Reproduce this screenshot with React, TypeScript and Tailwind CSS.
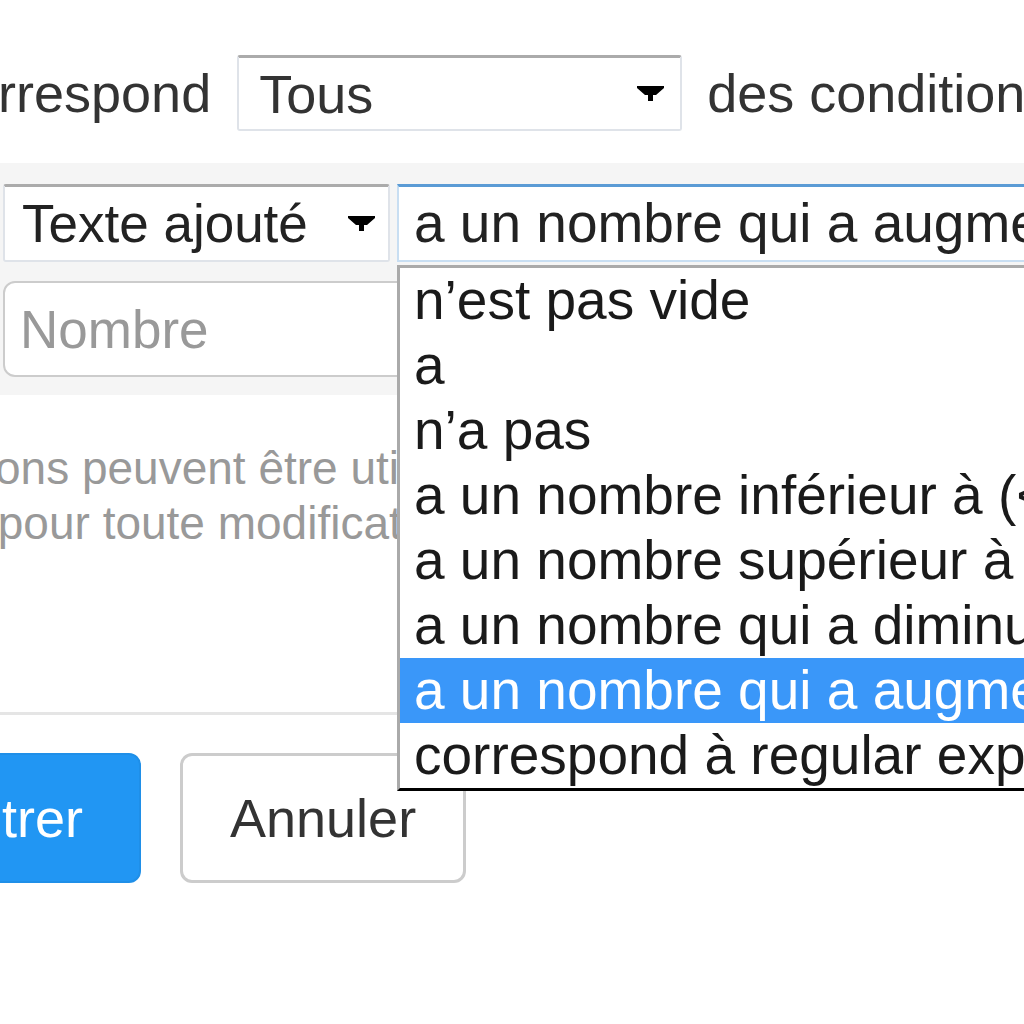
import { useState } from "react";

const options = [
  "n’est pas vide",
  "a",
  "n’a pas",
  "a un nombre inférieur à (<)",
  "a un nombre supérieur à (>)",
  "a un nombre qui a diminué",
  "a un nombre qui a augmenté",
  "correspond à regular expression",
];

function Caret() {
  return (
    <svg width="27" height="16" viewBox="0 0 27 16" className="shrink-0">
      <polygon
        points="0,0 27,0 27,2 19,9 16,9 16,15 11,15 11,9 8,9 0,2"
        fill="#000"
      />
    </svg>
  );
}

function FakeSelect({
  value,
  className,
}: {
  value: string;
  className: string;
}) {
  return (
    <div
      className={`flex items-center justify-between shrink-0 bg-white rounded-[3px] border-2 border-[#dfe3e9] border-t-[3px] border-t-[#ababab] ${className}`}
    >
      <span className="whitespace-nowrap">{value}</span>
      <Caret />
    </div>
  );
}

export default function App() {
  const [selected] = useState(6);

  return (
    <div className="relative w-[1024px] h-[1024px] overflow-hidden bg-white font-['Liberation_Sans',Arial,sans-serif] text-[54px] leading-none text-[#333]">
      {/* ligne "correspond ... des conditions" */}
      <div className="flex items-center h-[76px] mt-[55px] ml-[-59px] whitespace-nowrap">
        <span className="shrink-0">correspond</span>
        <FakeSelect value="Tous" className="ml-[26px] w-[445px] h-[76px] pl-[20px] pr-[16px]" />
        <span className="ml-[25px] shrink-0">des conditions</span>
      </div>

      {/* bloc condition */}
      <div className="mt-[32px] bg-[#f5f5f5] pt-[21px] pb-[18px] pl-[3px]">
        <div className="flex gap-[7px] whitespace-nowrap">
          <FakeSelect
            value="Texte ajouté"
            className="w-[387px] h-[78px] pl-[17px] pr-[13px] text-[53px] text-[#222]"
          />
          <div className="relative shrink-0 w-[800px] h-[78px] bg-white border-2 border-[#c8def2] border-t-[3px] border-t-[#5b9bd5] flex items-center pl-[15px] text-[55px] text-[#222]">
            a un nombre qui a augmenté
            <ul className="absolute z-10 left-[-2px] top-[78px] w-[800px] bg-white border-l-[3px] border-t-[3px] border-[#aaaaaa] border-b-[3px] border-b-black text-[#1a1a1a]">
              {options.map((o, i) => (
                <li
                  key={o}
                  className={`h-[65px] leading-[65px] pl-[14px] whitespace-nowrap ${
                    i === selected ? "bg-[#3a97f9] text-white" : ""
                  }`}
                >
                  {o}
                </li>
              ))}
            </ul>
          </div>
        </div>
        <input
          placeholder="Nombre"
          className="mt-[19px] block w-[760px] h-[96px] bg-white border-2 border-[#cccccc] rounded-[12px] pl-[15px] text-[53px] placeholder:text-[#999] outline-none"
        />
      </div>

      {/* aide */}
      <div className="mt-[46px] text-[46px] leading-[55px] text-[#999] whitespace-nowrap">
        <div className="ml-[-405px]">
          <span className="inline-block w-[400px] text-right">Plusieurs conditi</span>ons peuvent être utilisées ensemble
        </div>
        <div className="ml-[-415px]">
          <span className="inline-block w-[400px] text-right">et seront vérifiées</span> pour toute modification du texte
        </div>
      </div>

      <div className="mt-[161px] h-[3px] bg-[#e5e5e5]" />

      {/* boutons */}
      <div className="mt-[38px] ml-[-113px] flex gap-[39px]">
        <button className="h-[130px] px-[56px] rounded-[12px] bg-[#2196f3] border-2 border-[#1f8fe8] text-white">
          Filtrer
        </button>
        <button className="h-[130px] px-[47px] rounded-[12px] bg-white border-[3px] border-[#cccccc] text-[#333]">
          Annuler
        </button>
      </div>
    </div>
  );
}
